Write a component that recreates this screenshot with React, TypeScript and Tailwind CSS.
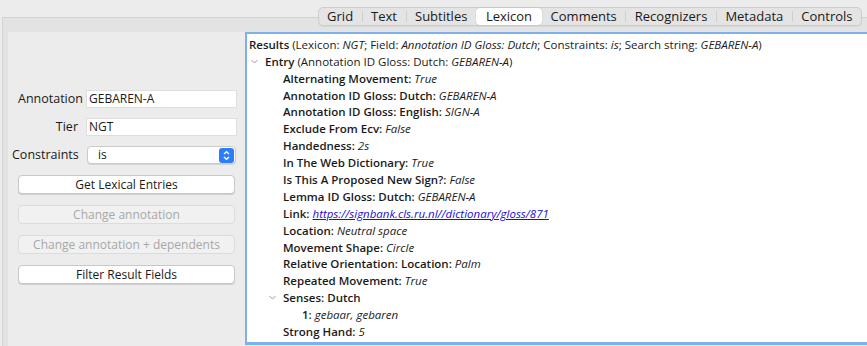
import React from "react";

const tabs = ["Grid", "Text", "Subtitles", "Lexicon", "Comments", "Recognizers", "Metadata", "Controls"];

type Field = { label: string; value: string; link?: boolean };

const fields: Field[] = [
  { label: "Alternating Movement", value: "True" },
  { label: "Annotation ID Gloss: Dutch", value: "GEBAREN-A" },
  { label: "Annotation ID Gloss: English", value: "SIGN-A" },
  { label: "Exclude From Ecv", value: "False" },
  { label: "Handedness", value: "2s" },
  { label: "In The Web Dictionary", value: "True" },
  { label: "Is This A Proposed New Sign?", value: "False" },
  { label: "Lemma ID Gloss: Dutch", value: "GEBAREN-A" },
  { label: "Link", value: "https://signbank.cls.ru.nl//dictionary/gloss/871", link: true },
  { label: "Location", value: "Neutral space" },
  { label: "Movement Shape", value: "Circle" },
  { label: "Relative Orientation: Location", value: "Palm" },
  { label: "Repeated Movement", value: "True" },
];

function Chevron() {
  return (
    <svg width="9" height="9" viewBox="0 0 9 9" className="shrink-0">
      <path d="M1.5 3 L4.5 6 L7.5 3" fill="none" stroke="#9a9a9a" strokeWidth="1" />
    </svg>
  );
}

function Row({ indent, children }: { indent: number; children: React.ReactNode }) {
  return (
    <div className="h-[16.9px] flex items-center whitespace-nowrap" style={{ paddingLeft: indent }}>
      {children}
    </div>
  );
}

function MacButton({ label, disabled }: { label: string; disabled?: boolean }) {
  return (
    <button
      className={
        "h-[19px] w-full rounded-[4px] border text-[12px] leading-none " +
        (disabled
          ? "bg-[#f1f1f1] border-[#dcdcdc] text-[#a8a8a8]"
          : "bg-white border-[#c8c8c8] text-[#1a1a1a] shadow-[0_1px_0_rgba(0,0,0,0.12)]")
      }
    >
      {label}
    </button>
  );
}

export default function App() {
  return (
    <div
      className="w-[867px] h-[346px] overflow-hidden bg-[#ececec] text-[#1a1a1a] flex flex-col text-[12px]"
      style={{ fontFamily: '"Lucida Grande", "Open Sans", sans-serif' }}
    >
      {/* tab strip */}
      <div className="h-[7px] shrink-0" />
      <div className="relative z-10 flex justify-end pr-[5px] -mb-[9px] shrink-0">
        <div className="flex h-[19px] items-stretch rounded-[5px] border border-[#cdcdcd] bg-[#e4e4e4] text-[13px] shadow-[0_1px_0_rgba(0,0,0,0.05)]">
          {tabs.map((t, i) => {
            const active = t === "Lexicon";
            const prevActive = tabs[i - 1] === "Lexicon";
            return (
              <div key={t} className="flex items-center">
                {i > 0 && !active && !prevActive && <div className="w-px h-[11px] bg-[#cfcfcf]" />}
                <div
                  className={
                    "h-full flex items-center " +
                    (active
                      ? "bg-white rounded-[4px] px-[10px] shadow-[0_0_1px_rgba(0,0,0,0.3)]"
                      : "px-[8.5px]")
                  }
                >
                  {t}
                </div>
              </div>
            );
          })}
        </div>
      </div>

      {/* main panel */}
      <div className="flex-1 ml-[2px] border-t border-l border-[#d2d2d2] bg-[#e3e3e3] pl-[5px] pt-[14px] flex min-h-0">
        <div className="flex flex-1 bg-[#ececec] min-h-0">
          {/* left form */}
          <div className="w-[237px] shrink-0 flex flex-col pt-[58px] pl-[10px] pr-[10px]">
            <div className="flex items-center h-[18px]">
              <span className="w-[68px] text-right pr-[8px] text-[12.5px]">Annotation</span>
              <div className="flex-1 h-[18px] bg-white border border-[#dedede] flex items-center pl-[2px] -mr-[2px]">GEBAREN-A</div>
            </div>
            <div className="flex items-center h-[18px] mt-[10px]">
              <span className="w-[68px] text-right pr-[8px] text-[12.5px]">Tier</span>
              <div className="flex-1 h-[18px] bg-white border border-[#dedede] flex items-center pl-[2px] -mr-[2px]">NGT</div>
            </div>
            <div className="flex items-center h-[18px] mt-[10px] -ml-[6px]">
              <span className="w-[75px] text-right pr-[9px] whitespace-nowrap text-[12.5px]">Constraints</span>
              <div className="flex-1 h-[18px] bg-white rounded-[4px] border border-[#cbcbcb] shadow-[0_1px_0_rgba(0,0,0,0.1)] flex items-center pl-[10px] pr-[1px] -mr-[1px]">
                <span className="flex-1">is</span>
                <div className="w-[15px] h-[15px] rounded-[3px] bg-[#2d7ef6] flex items-center justify-center">
                  <svg width="9" height="11" viewBox="0 0 9 11">
                    <path d="M2 4 L4.5 1.8 L7 4 M2 7 L4.5 9.2 L7 7" fill="none" stroke="#fff" strokeWidth="1.4" />
                  </svg>
                </div>
              </div>
            </div>
            <div className="flex flex-col gap-[11px] mt-[11px]">
              <MacButton label="Get Lexical Entries" />
              <MacButton label="Change annotation" disabled />
              <MacButton label="Change annotation + dependents" disabled />
              <MacButton label="Filter Result Fields" />
            </div>
          </div>

          {/* results */}
          <div className="flex-1 mb-[1px] bg-white border-t-[2px] border-l-[2px] border-b-[3px] border-[#7eb1ec] -mr-[4px] pt-[2px] pl-[1px] text-[11.5px]">
            <Row indent={1}>
              <span className="font-semibold">Results</span>&nbsp;(Lexicon:&nbsp;<i>NGT</i>; Field:&nbsp;
              <i>Annotation ID Gloss: Dutch</i>; Constraints:&nbsp;<i>is</i>; Search string:&nbsp;<i>GEBAREN-A</i>)
            </Row>
            <Row indent={2}>
              <Chevron />
              <span className="ml-[6px] font-semibold">Entry</span>&nbsp;(Annotation ID Gloss: Dutch:&nbsp;
              <i>GEBAREN-A</i>)
            </Row>
            {fields.map((f) => (
              <Row key={f.label} indent={35}>
                <span className="font-semibold">{f.label}:</span>&nbsp;
                {f.link ? (
                  <i className="text-[#1a0dd8] underline">{f.value}</i>
                ) : (
                  <i>{f.value}</i>
                )}
              </Row>
            ))}
            <Row indent={20}>
              <Chevron />
              <span className="ml-[6px] font-semibold">Senses: Dutch</span>
            </Row>
            <Row indent={54}>
              <span className="font-semibold">1:</span>&nbsp;<i>gebaar, gebaren</i>
            </Row>
            <Row indent={35}>
              <span className="font-semibold">Strong Hand:</span>&nbsp;<i>5</i>
            </Row>
          </div>
        </div>
      </div>
    </div>
  );
}
